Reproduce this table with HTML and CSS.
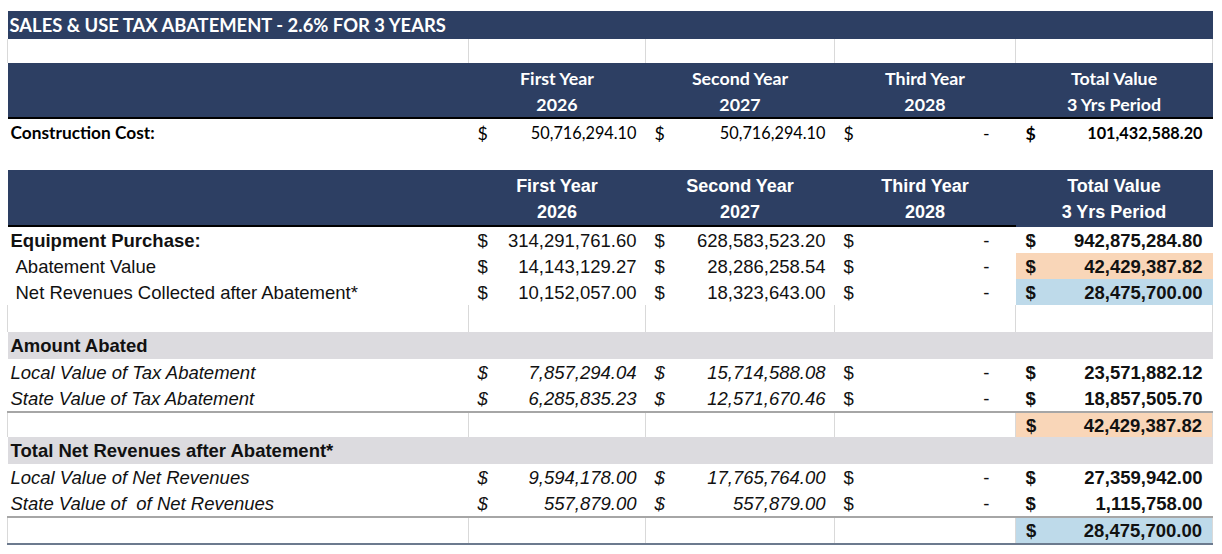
FILE: index.html
```html
<!DOCTYPE html>
<html lang="en">
<head>
<meta charset="utf-8">
<title>Sales &amp; Use Tax Abatement</title>
<link rel="stylesheet" href="styles.css">
</head>
<body>
<div class="sheet">
  <table class="tbl s1">
    <colgroup>
      <col class="c-label"><col class="c-y1"><col class="c-y2"><col class="c-y3"><col class="c-tot">
    </colgroup>
    <tr class="title"><td colspan="5">SALES &amp; USE TAX ABATEMENT - 2.6% FOR 3 YEARS</td></tr>
    <tr class="blank"><td></td><td></td><td></td><td></td><td></td></tr>
    <tr class="head">
      <th></th>
      <th>First Year<br>2026</th>
      <th>Second Year<br>2027</th>
      <th>Third Year<br>2028</th>
      <th>Total Value<br>3 Yrs Period</th>
    </tr>
    <tr class="row">
      <td class="lbl b cc">Construction Cost:</td>
      <td><div class="amt"><span>$</span><span class="n">50,716,294.10</span></div></td>
      <td><div class="amt"><span>$</span><span class="n">50,716,294.10</span></div></td>
      <td><div class="amt"><span>$</span><span class="dash">-</span></div></td>
      <td class="tot"><div class="amt b"><span>$</span><span class="n">101,432,588.20</span></div></td>
    </tr>
  </table>

  <table class="tbl s2">
    <colgroup>
      <col class="c-label"><col class="c-y1"><col class="c-y2"><col class="c-y3"><col class="c-tot">
    </colgroup>
    <tr class="head">
      <th></th>
      <th>First Year<br>2026</th>
      <th>Second Year<br>2027</th>
      <th>Third Year<br>2028</th>
      <th class="nob">Total Value<br>3 Yrs Period</th>
    </tr>
    <tr class="row">
      <td class="lbl b">Equipment Purchase:</td>
      <td><div class="amt"><span>$</span><span>314,291,761.60</span></div></td>
      <td><div class="amt"><span>$</span><span>628,583,523.20</span></div></td>
      <td><div class="amt"><span>$</span><span class="dash">-</span></div></td>
      <td class="tot"><div class="amt b"><span>$</span><span>942,875,284.80</span></div></td>
    </tr>
    <tr class="row">
      <td class="lbl ind">Abatement Value</td>
      <td><div class="amt"><span>$</span><span>14,143,129.27</span></div></td>
      <td><div class="amt"><span>$</span><span>28,286,258.54</span></div></td>
      <td><div class="amt"><span>$</span><span class="dash">-</span></div></td>
      <td class="tot orange"><div class="amt b"><span>$</span><span>42,429,387.82</span></div></td>
    </tr>
    <tr class="row">
      <td class="lbl ind">Net Revenues Collected after Abatement*</td>
      <td><div class="amt"><span>$</span><span>10,152,057.00</span></div></td>
      <td><div class="amt"><span>$</span><span>18,323,643.00</span></div></td>
      <td><div class="amt"><span>$</span><span class="dash">-</span></div></td>
      <td class="tot blue"><div class="amt b"><span>$</span><span>28,475,700.00</span></div></td>
    </tr>
    <tr class="blank tall"><td></td><td></td><td></td><td></td><td></td></tr>
    <tr class="band"><td class="lbl b">Amount Abated</td><td></td><td></td><td></td><td></td></tr>
    <tr class="row it">
      <td class="lbl">Local Value of Tax Abatement</td>
      <td><div class="amt"><span>$</span><span>7,857,294.04</span></div></td>
      <td><div class="amt"><span>$</span><span>15,714,588.08</span></div></td>
      <td class="up"><div class="amt"><span>$</span><span class="dash">-</span></div></td>
      <td class="tot up"><div class="amt b"><span>$</span><span>23,571,882.12</span></div></td>
    </tr>
    <tr class="row it rule">
      <td class="lbl">State Value of Tax Abatement</td>
      <td><div class="amt"><span>$</span><span>6,285,835.23</span></div></td>
      <td><div class="amt"><span>$</span><span>12,571,670.46</span></div></td>
      <td class="up"><div class="amt"><span>$</span><span class="dash">-</span></div></td>
      <td class="tot up"><div class="amt b"><span>$</span><span>18,857,505.70</span></div></td>
    </tr>
    <tr class="blank">
      <td></td><td></td><td></td><td></td>
      <td class="tot orange"><div class="amt b"><span>$</span><span>42,429,387.82</span></div></td>
    </tr>
    <tr class="band"><td class="lbl b">Total Net Revenues after Abatement*</td><td></td><td></td><td></td><td></td></tr>
    <tr class="row it">
      <td class="lbl">Local Value of Net Revenues</td>
      <td><div class="amt"><span>$</span><span>9,594,178.00</span></div></td>
      <td><div class="amt"><span>$</span><span>17,765,764.00</span></div></td>
      <td class="up"><div class="amt"><span>$</span><span class="dash">-</span></div></td>
      <td class="tot up"><div class="amt b"><span>$</span><span>27,359,942.00</span></div></td>
    </tr>
    <tr class="row it rule">
      <td class="lbl">State Value of&nbsp; of Net Revenues</td>
      <td><div class="amt"><span>$</span><span>557,879.00</span></div></td>
      <td><div class="amt"><span>$</span><span>557,879.00</span></div></td>
      <td class="up"><div class="amt"><span>$</span><span class="dash">-</span></div></td>
      <td class="tot up"><div class="amt b"><span>$</span><span>1,115,758.00</span></div></td>
    </tr>
    <tr class="blank last">
      <td></td><td></td><td></td><td></td>
      <td class="tot blue"><div class="amt b"><span>$</span><span>28,475,700.00</span></div></td>
    </tr>
  </table>
</div>
</body>
</html>
```

FILE: styles.css
```css
html, body {
  margin: 0;
  background: #ffffff;
}

.sheet {
  padding: 11px 0 0 7px;
}

.tbl {
  border-collapse: collapse;
  table-layout: fixed;
  width: 1205px;
}

.c-label { width: 461px; }
.c-y1 { width: 177px; }
.c-y2 { width: 189px; }
.c-y3 { width: 181px; }
.c-tot { width: 197px; }

.tbl td, .tbl th {
  padding: 0;
  white-space: nowrap;
  overflow: hidden;
}

/* ---------- section 1 (Calibri-like) ---------- */
.s1 {
  font-family: Lato, "Open Sans", sans-serif;
  font-size: 17.8px;
  line-height: 20px;
  color: #000;
}

.s1 .title td {
  background: #2d3f63;
  color: #fff;
  font-weight: 700;
  font-size: 18.4px;
  height: 28px;
  padding: 0 2px;
  vertical-align: middle;
}

.s1 .head th {
  height: 51px;
  line-height: 26px;
  padding-top: 2px;
}

.s1 .row td {
  height: 27px;
}

.s1 .cc {
  font-size: 17.3px;
}

.s1 .n {
  font-size: 16.3px;
}

/* ---------- section 2 (Helvetica-like) ---------- */
.s2 {
  margin-top: 24px;
  font-family: "Liberation Sans", Arial, sans-serif;
  font-size: 18.5px;
  line-height: 21px;
  color: #111;
}

.s2 .head th {
  height: 49px;
  line-height: 26px;
  padding-top: 3px;
  font-size: 18px;
}

.s2 .head th.nob {
  border-bottom-color: #2d3f63;
}

/* ---------- shared rows ---------- */
.head th {
  background: #2d3f63;
  color: #fff;
  font-weight: 700;
  text-align: center;
  vertical-align: middle;
  border-bottom: 2px solid #000;
}

.blank td {
  height: 24px;
  border-left: 1px solid #d9d9d9;
  border-right: 1px solid #d9d9d9;
}

.blank.tall td {
  height: 27px;
}

.blank.last td {
  height: 25px;
}

.row td {
  height: 26px;
  vertical-align: middle;
}

.band td {
  height: 27px;
  background: #dcdbdf;
}

.rule td {
  border-bottom: 2px solid #a6a6a6;
}

.last td {
  border-bottom: 2px solid #6c7a8e;
}

.lbl {
  padding-left: 3px !important;
  text-align: left;
}

.ind {
  padding-left: 8px !important;
}

.b {
  font-weight: 700;
}

.it {
  font-style: italic;
}

.up {
  font-style: normal;
}

.amt {
  display: flex;
  justify-content: space-between;
  align-items: center;
  padding: 0 9px 0 9px;
}

.tot .amt {
  padding: 0 10px 0 10px;
}

.dash {
  padding-right: 17px;
}

.orange {
  background: #f9d6b8;
}

.blue {
  background: #bedaea;
}
```
